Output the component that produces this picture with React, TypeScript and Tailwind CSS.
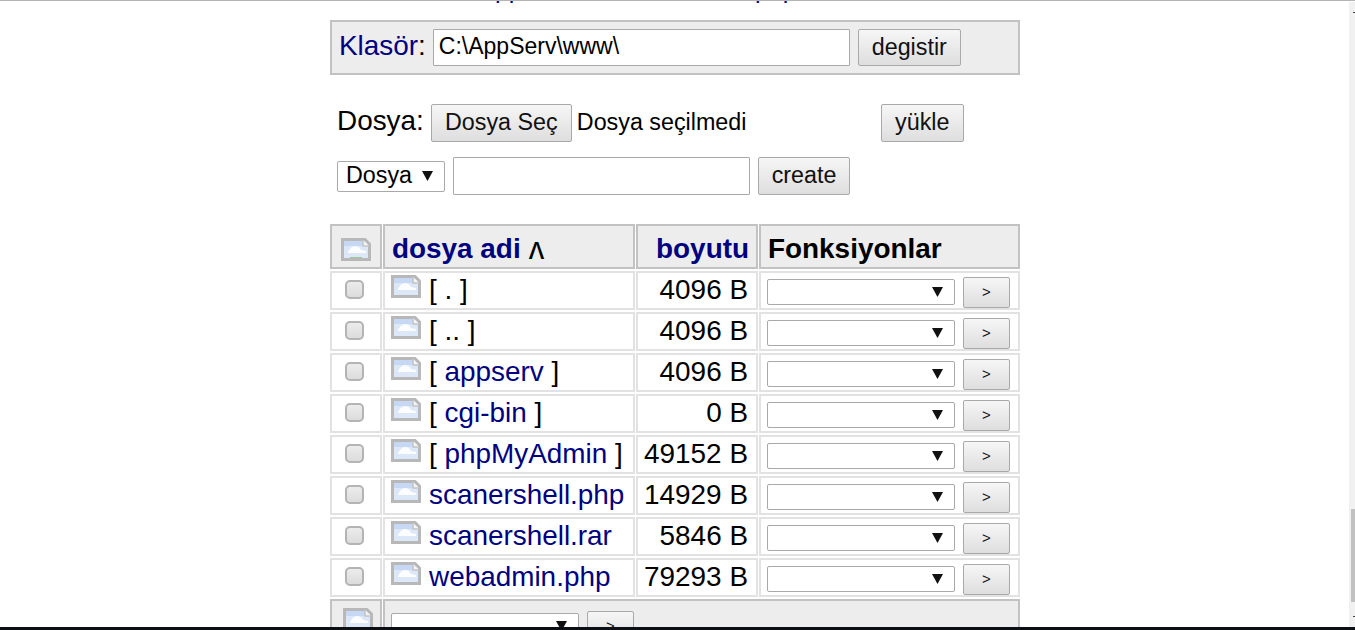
const files = [
  { name: ". ", dir: true, link: false, size: "4096 B" },
  { name: ".. ", dir: true, link: false, size: "4096 B" },
  { name: "appserv", dir: true, link: true, size: "4096 B" },
  { name: "cgi-bin", dir: true, link: true, size: "0 B" },
  { name: "phpMyAdmin", dir: true, link: true, size: "49152 B" },
  { name: "scanershell.php", dir: false, link: true, size: "14929 B" },
  { name: "scanershell.rar", dir: false, link: true, size: "5846 B" },
  { name: "webadmin.php", dir: false, link: true, size: "79293 B" },
];

const gridCols = "grid grid-cols-[52px_252px_122px_261px] gap-x-[1px]";
const btn =
  "rounded-[2px] border border-[#a9a9a9] bg-gradient-to-b from-[#f6f6f6] to-[#dedede] text-[#111] leading-none";

const BrokenImage = ({ ground = false }: { ground?: boolean }) => (
  <svg width="30" height="23" viewBox="0 0 30 23" className="block shrink-0">
    <path d="M1.5 1.5 H24 L28.5 6 V21.5 H1.5 Z" fill="#dce7f8" stroke="#b8b8b8" strokeWidth="3" />
    <rect x="3" y="3" width="19" height="5" fill="#c6d8f3" />
    <path d="M7 14 Q10 8 14 8 Q18 8 20 12 L25 13 L25 15 L7 15 Z" fill="#fbfdff" />
    <path d="M22 2 V8 H28" fill="#f4f4f4" stroke="#c4c4c4" strokeWidth="1.5" />
    {ground && <rect x="9" y="19" width="12" height="1" fill="#9cc79a" />}
  </svg>
);

const Arrow = () => (
  <svg width="11" height="10" viewBox="0 0 11 10" className="block shrink-0">
    <polygon points="0,0 11,0 5.5,10" fill="#111" />
  </svg>
);

const Checkbox = () => (
  <span className="block h-[19px] w-[19px] rounded-[5px] border-2 border-[#b4b4b4] bg-gradient-to-b from-[#ececec] to-[#dcdcdc]" />
);

const HeaderCell = ({ className, children }: { className: string; children: React.ReactNode }) => (
  <div className={`h-[45px] border-2 border-[#c2c2c2] bg-[#ededed] ${className}`}>{children}</div>
);

const App = () => {
  return (
    <div className="relative flex h-[630px] w-full flex-col overflow-hidden bg-white font-['Liberation_Sans',Arial,sans-serif] text-black">
      <div className="h-px shrink-0 bg-[#b4b4b4]" />
      <div className="flex min-h-0 flex-1">
        <main className="min-w-0 flex-1 pl-[330px]">
          <div className="h-[4px] overflow-hidden whitespace-nowrap pl-[151px] text-[25px] leading-none">
            <div className="-mt-[24px] flex text-[#000080]">
              <span>appserv</span>
              <span className="ml-[185px]">php</span>
            </div>
          </div>
          <div className="mt-[15px] flex h-[55px] w-[690px] items-center border-2 border-[#c2c2c2] bg-[#ededed] pl-[7px]">
            <span className="-mt-[4px] text-[27.9px] text-[#000080]">
              Klasör<span className="text-black">:</span>
            </span>
            <input
              readOnly
              value="C:\AppServ\www\"
              className="ml-[7px] h-[37px] w-[417px] rounded-[1px] border border-[#a9a9a9] bg-white px-[5px] pb-[2px] text-[23px] outline-none"
            />
            <button className={`${btn} ml-[8px] h-[37px] w-[103px] text-[23.3px]`}>degistir</button>
          </div>

          <div className="mt-[29px] flex h-[38px] w-[690px] items-center pl-[7px]">
            <span className="-mt-[4px] text-[27.9px]">Dosya:</span>
            <button className={`${btn} ml-[7px] h-[38px] w-[141px] text-[23.3px]`}>Dosya Seç</button>
            <span className="ml-[5px] w-[304px] pb-[1px] text-[23.3px]">Dosya seçilmedi</span>
            <button className={`${btn} h-[38px] w-[83px] text-[23.3px]`}>yükle</button>
          </div>

          <div className="mt-[15px] flex h-[38px] w-[690px] items-center pl-[7px]">
            <div className="flex h-[31px] w-[108px] items-center justify-between rounded-[2px] border border-[#a9a9a9] bg-white pb-[1px] pl-[8px] pr-[11px] text-[23.3px]">
              <span>Dosya</span>
              <Arrow />
            </div>
            <div className="ml-[8px] h-[38px] w-[297px] rounded-[1px] border border-[#a9a9a9] bg-white" />
            <button className={`${btn} ml-[8px] h-[38px] w-[92px] pb-[1px] text-[23.3px]`}>create</button>
          </div>

          <div className={`mt-[29px] w-[690px] ${gridCols}`}>
            <HeaderCell className="flex items-center justify-center pt-[6px]">
              <BrokenImage ground />
            </HeaderCell>
            <HeaderCell className="flex items-center pl-[7px] pt-[4px] text-[27.9px] font-bold">
              <span className="text-[#000080]">dosya adi</span>
              <span className="ml-[8px] text-[31px] font-normal leading-none">ʌ</span>
            </HeaderCell>
            <HeaderCell className="flex items-center justify-end pr-[7px] pt-[4px] text-[27.9px] font-bold text-[#000080]">
              boyutu
            </HeaderCell>
            <HeaderCell className="flex items-center pl-[7px] pt-[4px] text-[27.9px] font-bold">Fonksiyonlar</HeaderCell>
          </div>

          <div className="mt-[2px] flex w-[690px] flex-col gap-y-[2px]">
            {files.map((file) => (
              <div key={file.name} className={gridCols}>
                <div className="flex h-[39px] items-center justify-center border-2 border-[#e2e2e2] pb-[2px] pr-[4px]">
                  <Checkbox />
                </div>
                <div className="flex h-[39px] items-center border-2 border-[#e2e2e2] pb-[2px] pl-[6px] text-[27.9px]">
                  <span className="-mt-[6px]">
                    <BrokenImage />
                  </span>
                  <span className="ml-[8px] whitespace-pre">
                    {file.dir && "[ "}
                    {file.link ? <span className="text-[#000080]">{file.name}</span> : file.name.trim()}
                    {file.dir && " ]"}
                  </span>
                </div>
                <div className="flex h-[39px] items-center justify-end border-2 border-[#e2e2e2] pb-[2px] pr-[8px] text-[27.9px]">
                  {file.size}
                </div>
                <div className="flex h-[39px] items-center border-2 border-[#e2e2e2] pl-[6px]">
                  <div className="mt-[3px] flex h-[26px] w-[188px] items-center justify-end rounded-[2px] border border-[#a9a9a9] bg-white pr-[11px]">
                    <Arrow />
                  </div>
                  <button className={`${btn} ml-[8px] mt-[4px] h-[31px] w-[47px] pb-[2px] text-[15px]`}>&gt;</button>
                </div>
              </div>
            ))}
          </div>

          <div className={`mt-[2px] w-[690px] ${gridCols}`}>
            <div className="flex h-[45px] justify-center border-2 border-[#c2c2c2] bg-[#ededed] pl-[4px] pt-[7px]">
              <BrokenImage />
            </div>
            <div className="col-span-3 flex h-[45px] border-2 border-[#c2c2c2] bg-[#ededed] pl-[6px] pt-[12px]">
              <div className="flex h-[26px] w-[188px] items-center justify-end rounded-[2px] border border-[#a9a9a9] bg-white pr-[11px]">
                <Arrow />
              </div>
              <button className={`${btn} ml-[8px] -mt-[2px] h-[31px] w-[47px] pb-[2px] text-[15px]`}>&gt;</button>
            </div>
          </div>
        </main>
        <aside className="relative mt-px w-[6px] shrink-0 bg-[#f1f1f1]">
          <div className="absolute right-0 top-[507px] h-[93px] w-[4px] bg-[#c1c1c1]" />
          <div className="absolute right-0 top-[10px] h-px w-[2px] bg-[#444]" />
          <div className="absolute right-0 top-[614px] h-px w-[2px] bg-[#444]" />
        </aside>
      </div>
      <div className="absolute bottom-0 left-0 right-0 h-[3px] bg-[#0c0f14]" />
    </div>
  );
};

export default App;
